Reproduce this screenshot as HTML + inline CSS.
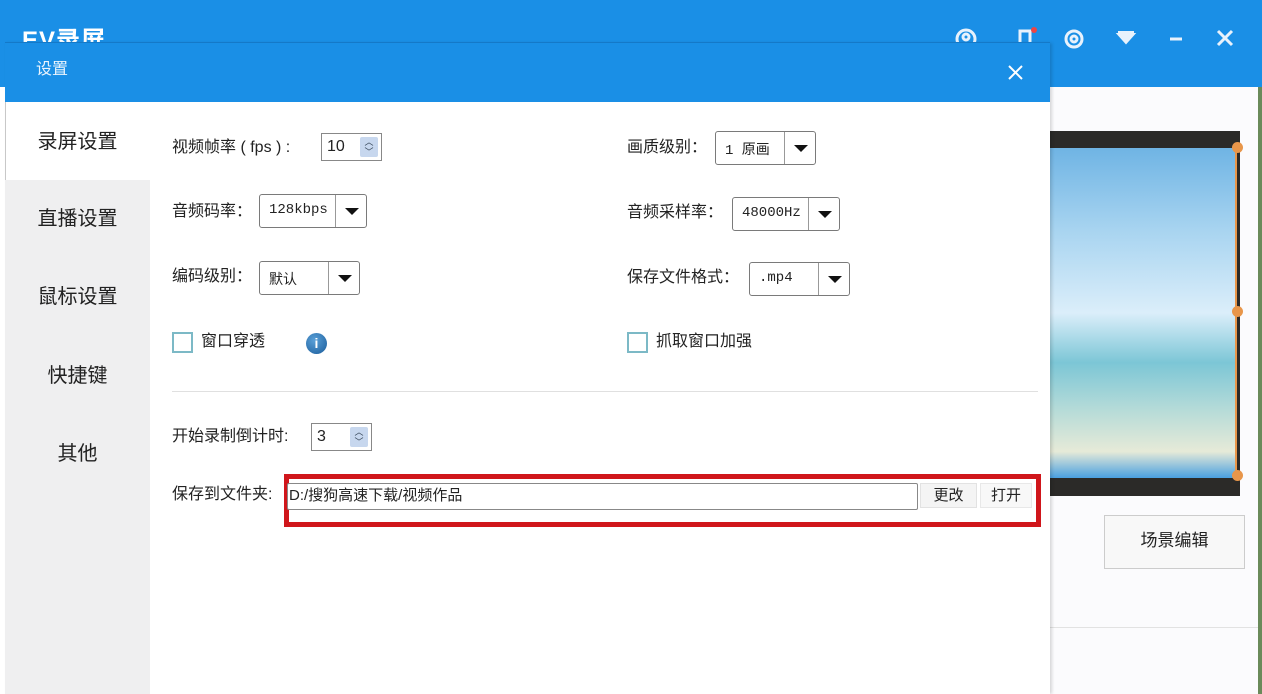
<!DOCTYPE html>
<html><head><meta charset="utf-8"><style>
*{margin:0;padding:0;box-sizing:border-box}
body{width:1262px;height:694px;overflow:hidden;position:relative;background:#fff;font-family:"Liberation Sans","Noto Sans CJK SC",sans-serif;color:#222}
.a{position:absolute}
.lbl{position:absolute;font-size:16px;line-height:18px;color:#222;white-space:nowrap}
.sel{position:absolute;height:34px;border:1px solid #7a7a7a;border-radius:3px;background:#fff;font-size:14px;font-family:"Liberation Mono","Noto Sans CJK SC",monospace}
.sel span{position:absolute;left:9px;top:7px}
.sel i{position:absolute;right:0;top:0;bottom:0;width:31px;border-left:1px solid #999}
.sel i:after{content:"";position:absolute;left:9px;top:13px;border-left:7px solid transparent;border-right:7px solid transparent;border-top:7px solid #111}
.spin{position:absolute;height:28px;border:1px solid #888;background:#fff;font-size:16px}
.spin span{position:absolute;left:5px;top:4px}
.spin i{position:absolute;right:3px;top:3px;width:18px;height:20px;background:#c7d7ee;border-radius:2px;font-style:normal;font-size:9px;color:#345;text-align:center;line-height:10px}
.cb{position:absolute;width:21px;height:21px;border:2px solid #7cb9c6;background:#fff}
.nav{position:absolute;left:5px;width:145px;text-align:center;font-size:20px;line-height:24px;color:#222}
</style></head><body>
<div class="a" style="left:0;top:0;width:1262px;height:87px;background:#1a8fe6"></div>
<div class="a" style="left:22px;top:20px;color:#fff;font-size:24px;font-weight:bold;letter-spacing:1px">EV录屏</div>
<svg class="a" style="left:950px;top:25px" width="290" height="30" viewBox="0 0 290 30">
<g fill="none" stroke="#e8f2fc" stroke-width="3">
<circle cx="16" cy="14" r="9"/><circle cx="16" cy="12" r="3"/>
<circle cx="124" cy="14" r="8"/><circle cx="124" cy="14" r="3"/>
<path d="M220 14h12M268 6l14 14M282 6l-14 14"/>
<path d="M70 20V6h10v14"/></g>
<circle cx="84" cy="5" r="3" fill="#e44"/>
<path d="M168 9h16l-8 9z M168 7h16" fill="#e8f2fc" stroke="#e8f2fc" stroke-width="2"/>
</svg>
<div class="a" style="left:1050px;top:87px;width:208px;height:607px;background:#fbfbfd"></div>
<div class="a" style="left:1258px;top:87px;width:4px;height:607px;background:#6a8a5a"></div>
<div class="a" style="left:1050px;top:131px;width:190px;height:365px;background:#2b2a28"></div>
<div class="a" style="left:1050px;top:148px;width:187px;height:330px;background:linear-gradient(180deg,#6fb4e4 0%,#a8d4f0 25%,#dbeefa 50%,#7cc6d6 65%,#b8dcd8 80%,#e6ead8 92%,#4aa0e0 100%);border-right:2px solid #e8964a"></div>
<div class="a" style="left:1232px;top:142px;width:11px;height:11px;border-radius:50%;background:#e8964a"></div>
<div class="a" style="left:1232px;top:306px;width:11px;height:11px;border-radius:50%;background:#e8964a"></div>
<div class="a" style="left:1232px;top:470px;width:11px;height:11px;border-radius:50%;background:#e8964a"></div>
<div class="a" style="left:1104px;top:515px;width:141px;height:54px;border:1px solid #ccc;background:#f8f8f8;font-size:17px;text-align:center;line-height:50px">场景编辑</div>
<div class="a" style="left:1050px;top:627px;width:208px;height:1px;background:#e2e2e2"></div>

<div class="a" style="left:5px;top:43px;width:1045px;height:651px;background:#fff;border-left:1px solid #c8c8c8;box-shadow:2px 0 3px rgba(0,0,0,.15)"></div>
<div class="a" style="left:5px;top:42px;width:1045px;height:60px;background:#1a8fe6;border-top:1px solid #1479c8"></div>
<div class="a" style="left:36px;top:61px;color:#eaf4fd;font-size:16px;line-height:18px">设置</div>
<svg class="a" style="left:1007px;top:64px" width="17" height="17"><path d="M2 2l13 13M15 2L2 15" stroke="#fff" stroke-width="2"/></svg>
<div class="a" style="left:5px;top:180px;width:145px;height:514px;background:#efeff0"></div>
<div class="nav" style="top:130px">录屏设置</div>
<div class="nav" style="top:207px">直播设置</div>
<div class="nav" style="top:285px">鼠标设置</div>
<div class="nav" style="top:364px">快捷键</div>
<div class="nav" style="top:442px">其他</div>

<div class="lbl" style="left:172px;top:139px">视频帧率 ( fps ) :</div>
<div class="spin" style="left:321px;top:133px;width:61px"><span>10</span><i>︿<br>﹀</i></div>
<div class="lbl" style="left:172px;top:203px">音频码率：</div>
<div class="sel" style="left:259px;top:194px;width:108px"><span>128kbps</span><i></i></div>
<div class="lbl" style="left:172px;top:268px">编码级别：</div>
<div class="sel" style="left:259px;top:261px;width:101px"><span style="font-family:'Noto Sans CJK SC'">默认</span><i style="width:31px"></i></div>
<div class="cb" style="left:172px;top:332px"></div>
<div class="lbl" style="left:201px;top:333px">窗口穿透</div>
<div class="a" style="left:306px;top:333px;width:21px;height:21px;border-radius:50%;background:radial-gradient(circle at 40% 35%,#5aa0d8,#1a5c9a);color:#fff;font-size:14px;font-weight:bold;text-align:center;line-height:21px">i</div>
<div class="lbl" style="left:627px;top:139px">画质级别：</div>
<div class="sel" style="left:715px;top:131px;width:101px"><span>1 原画</span><i></i></div>
<div class="lbl" style="left:627px;top:204px">音频采样率：</div>
<div class="sel" style="left:732px;top:197px;width:108px"><span>48000Hz</span><i></i></div>
<div class="lbl" style="left:627px;top:269px">保存文件格式：</div>
<div class="sel" style="left:749px;top:262px;width:101px"><span>.mp4</span><i></i></div>
<div class="cb" style="left:627px;top:332px"></div>
<div class="lbl" style="left:656px;top:333px">抓取窗口加强</div>
<div class="a" style="left:172px;top:391px;width:866px;height:1px;background:#e0e0e0"></div>
<div class="lbl" style="left:172px;top:428px">开始录制倒计时:</div>
<div class="spin" style="left:311px;top:423px;width:61px"><span>3</span><i>︿<br>﹀</i></div>
<div class="lbl" style="left:172px;top:486px">保存到文件夹:</div>
<div class="a" style="left:284px;top:474px;width:757px;height:53px;border:5px solid #d0161b"></div>
<div class="a" style="left:287px;top:483px;width:631px;height:27px;border:1px solid #888;border-radius:2px;background:#fff;font-size:15px;line-height:20px;padding:2px 0 0 1px">D:/搜狗高速下载/视频作品</div>
<div class="a" style="left:920px;top:483px;width:57px;height:25px;background:#f4f4f4;border:1px solid #e2e2e2;font-size:15px;text-align:center;line-height:23px">更改</div>
<div class="a" style="left:980px;top:483px;width:52px;height:25px;background:#f8f8f8;border:1px solid #e8e8e8;font-size:15px;text-align:center;line-height:23px">打开</div>
</body></html>
